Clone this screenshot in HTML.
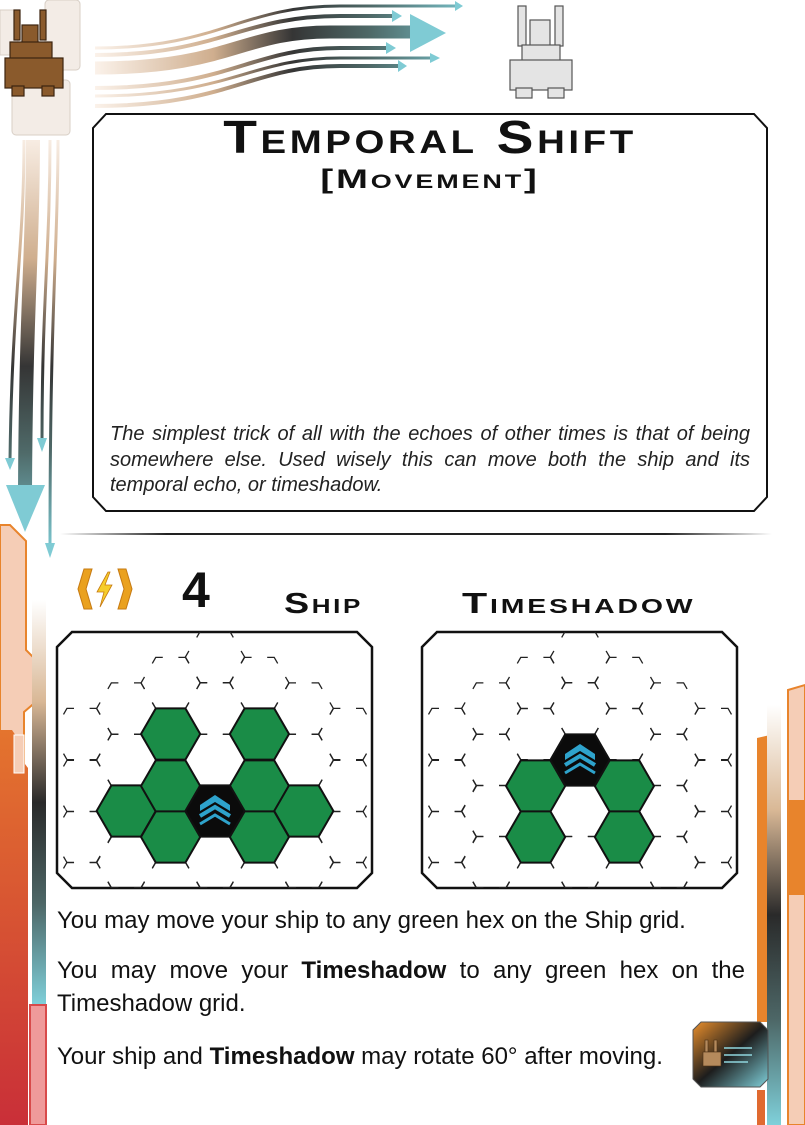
<!DOCTYPE html>
<html><head><meta charset="utf-8"><style>
html,body{margin:0;padding:0;background:#fff}
body{width:805px;height:1125px;position:relative;overflow:hidden;font-family:"Liberation Sans",sans-serif}
svg{position:absolute;left:0;top:0}
.t{position:absolute;white-space:nowrap;color:#111}
.title{left:93px;width:674px;text-align:center;top:111px;font-size:46px;font-weight:bold;font-variant:small-caps;letter-spacing:3px;line-height:52px;transform:scaleX(1.2);transform-origin:50% 0}
.sub{left:93px;width:674px;text-align:center;top:163px;font-size:27px;font-weight:bold;font-variant:small-caps;letter-spacing:2px;line-height:32px;transform:scaleX(1.42);transform-origin:50% 0}
.flav{position:absolute;left:110px;width:640px;top:422px;font-size:20px;font-style:italic;line-height:25.5px;text-align:justify;color:#222}
.body{position:absolute;left:57px;width:688px;font-size:24px;line-height:33px;text-align:justify;color:#111}
.lbl{font-size:29px;font-weight:bold;font-variant:small-caps;letter-spacing:2px;transform-origin:0 0}
</style></head><body>
<svg width="805" height="1125" viewBox="0 0 805 1125">
<defs>
<linearGradient id="gh" gradientUnits="userSpaceOnUse" x1="95" y1="0" x2="490" y2="0">
<stop offset="0" stop-color="#fbf2ea"/><stop offset="0.3" stop-color="#cfae8e"/><stop offset="0.5" stop-color="#353535"/><stop offset="0.7" stop-color="#4f6a69"/><stop offset="1" stop-color="#80d2dc"/></linearGradient>
<linearGradient id="gv" gradientUnits="userSpaceOnUse" x1="0" y1="130" x2="0" y2="560">
<stop offset="0" stop-color="#fbf2ea"/><stop offset="0.3" stop-color="#cfae8e"/><stop offset="0.55" stop-color="#353535"/><stop offset="0.75" stop-color="#4f6a69"/><stop offset="1" stop-color="#80d2dc"/></linearGradient>
<linearGradient id="gs" x1="0" y1="0" x2="0" y2="1">
<stop offset="0" stop-color="#fff"/><stop offset="0.25" stop-color="#d9b896"/><stop offset="0.5" stop-color="#2a2a2a"/><stop offset="0.75" stop-color="#4d6767"/><stop offset="1" stop-color="#7fd0da"/></linearGradient>
<linearGradient id="gr" x1="0" y1="0" x2="0" y2="1">
<stop offset="0" stop-color="#e4742e"/><stop offset="1" stop-color="#c92f38"/></linearGradient>
<linearGradient id="gi" x1="0" y1="0" x2="1" y2="1">
<stop offset="0" stop-color="#ea8f2c"/><stop offset="0.5" stop-color="#1d1d1d"/><stop offset="1" stop-color="#7fd0da"/></linearGradient>
<linearGradient id="dv" x1="0" y1="0" x2="1" y2="0">
<stop offset="0" stop-color="#fff"/><stop offset="0.15" stop-color="#222"/><stop offset="0.85" stop-color="#222"/><stop offset="1" stop-color="#fff"/></linearGradient>
<path id="hx" d="M-29.6 0L-14.8-25.65L14.8-25.65L29.6 0L14.8 25.65L-14.8 25.65Z"/>
<g id="chev">
<use href="#hx" fill="#0b0b0b" stroke="#111" stroke-width="2"/>
<path d="M-15-6L0-16L15-6L15 0L0-9L-15 0Z" fill="#2ea3cc"/>
<polyline points="-15,5 0,-4 15,5" fill="none" stroke="#2ea3cc" stroke-width="4"/>
<polyline points="-15,13 0,4 15,13" fill="none" stroke="#2ea3cc" stroke-width="3"/>
</g>
<clipPath id="c1"><path d="M72 632L357 632L372 647L372 873L357 888L72 888L57 873L57 647Z"/></clipPath>
<clipPath id="c2"><path d="M437 632L722 632L737 647L737 873L722 888L437 888L422 873L422 647Z"/></clipPath>
<g id="ghost" fill="none" stroke="#222" stroke-width="1.3" stroke-dasharray="7 15.6 7 0">
<use href="#hx" x="0" y="657"/><use href="#hx" x="0" y="708.5"/><use href="#hx" x="0" y="760"/><use href="#hx" x="0" y="811"/><use href="#hx" x="0" y="862"/>
<use href="#hx" x="-44.4" y="683"/><use href="#hx" x="-44.4" y="734"/><use href="#hx" x="-44.4" y="786"/><use href="#hx" x="-44.4" y="837"/><use href="#hx" x="-44.4" y="888"/>
<use href="#hx" x="44.4" y="683"/><use href="#hx" x="44.4" y="734"/><use href="#hx" x="44.4" y="786"/><use href="#hx" x="44.4" y="837"/><use href="#hx" x="44.4" y="888"/>
<use href="#hx" x="-88.8" y="708.5"/><use href="#hx" x="-88.8" y="760"/><use href="#hx" x="-88.8" y="811"/><use href="#hx" x="-88.8" y="862"/>
<use href="#hx" x="88.8" y="708.5"/><use href="#hx" x="88.8" y="760"/><use href="#hx" x="88.8" y="811"/><use href="#hx" x="88.8" y="862"/>
<use href="#hx" x="-133.2" y="734"/><use href="#hx" x="-133.2" y="786"/><use href="#hx" x="-133.2" y="837"/><use href="#hx" x="-133.2" y="888"/>
<use href="#hx" x="133.2" y="734"/><use href="#hx" x="133.2" y="786"/><use href="#hx" x="133.2" y="837"/><use href="#hx" x="133.2" y="888"/>
</g>
</defs>

<g fill="none" stroke="url(#gh)">
<path d="M95 48C220 48 240 6 340 6L455 6" stroke-width="3"/>
<path d="M95 55C220 55 240 16 340 16L395 16" stroke-width="4"/>
<path d="M95 68C230 68 240 32 330 32L415 32" stroke-width="13"/>
<path d="M95 88C230 88 250 48 340 48L390 48" stroke-width="4"/>
<path d="M95 96C230 96 250 58 340 58L432 58" stroke-width="3"/>
<path d="M95 106C230 106 250 66 340 66L400 66" stroke-width="4"/>
</g>
<g fill="#7fcbd4">
<path d="M455 1L463 6L455 11Z"/><path d="M392 10L402 16L392 22Z"/><path d="M410 14L446 33L410 52Z"/>
<path d="M386 42L396 48L386 54Z"/><path d="M430 53L440 58L430 63Z"/><path d="M398 60L407 66L398 72Z"/></g>

<g fill="#f3ece6" stroke="#d8cfc6" stroke-width="1">
<rect x="45" y="0" width="35" height="70" rx="4"/><rect x="12" y="80" width="58" height="55" rx="4"/><rect x="0" y="10" width="18" height="45"/></g>
<g fill="#8a5a2c" stroke="#3c2410" stroke-width="1.2">
<rect x="14" y="10" width="6" height="30"/><rect x="40" y="10" width="6" height="30"/>
<rect x="22" y="25" width="16" height="20"/><rect x="10" y="42" width="42" height="20"/>
<rect x="5" y="58" width="58" height="30"/><rect x="12" y="86" width="12" height="10"/><rect x="42" y="86" width="12" height="10"/></g>
<g fill="#e4e4e4" stroke="#555" stroke-width="1.2">
<rect x="518" y="6" width="8" height="40"/><rect x="555" y="6" width="8" height="40"/>
<rect x="530" y="20" width="20" height="30"/><rect x="522" y="45" width="38" height="20"/>
<rect x="510" y="60" width="62" height="30"/><rect x="516" y="88" width="16" height="10"/><rect x="548" y="88" width="16" height="10"/></g>

<g fill="none" stroke="url(#gv)">
<path d="M24 140C24 250 12 300 10 460" stroke-width="3"/>
<path d="M33 140C33 250 26 300 25 490" stroke-width="14"/>
<path d="M50 140C50 250 42 300 42 440" stroke-width="3"/>
<path d="M58 140C58 250 50 300 50 545" stroke-width="3"/>
</g>
<g fill="#7fcbd4"><path d="M5 458L15 458L10 470Z"/><path d="M37 438L47 438L42 452Z"/><path d="M6 485L45 485L25 532Z"/><path d="M45 543L55 543L50 558Z"/></g>

<path d="M0 525L10 525L26 541L26 650L38 662L38 700L24 712L24 780L0 780Z" fill="#f5cdb6" stroke="#e8842c" stroke-width="2"/>
<path d="M0 730L12 730L22 745L22 760L28 768L28 1125L0 1125Z" fill="url(#gr)"/>
<rect x="14" y="735" width="10" height="38" fill="#f5cdb6" stroke="#fff" stroke-width="1"/>
<rect x="32" y="600" width="14" height="405" fill="url(#gs)"/>
<path d="M30 1005L46 1005L46 1125L30 1125Z" fill="#ef9a9a" stroke="#d84a4a" stroke-width="2"/>

<path d="M757 738L770 735L770 1022L757 1022Z" fill="#e8842c"/>
<rect x="767" y="705" width="14" height="420" fill="url(#gs)"/>
<path d="M788 690L805 685L805 1125L788 1125Z" fill="#f5cdb6" stroke="#e8842c" stroke-width="2"/>
<rect x="788" y="800" width="17" height="95" fill="#e8842c"/>
<rect x="757" y="1090" width="8" height="35" fill="#e06a30"/>

<path d="M106 114L754 114L767 128L767 497L754 511L106 511L93 497L93 128Z" fill="#fff" stroke="#111" stroke-width="2"/>
<rect x="60" y="533" width="712" height="2" fill="url(#dv)"/>

<path d="M92 569L84 569L78 589L84 609L92 609L86 589Z" fill="#eaa11f" stroke="#c67a12"/>
<path d="M118 569L126 569L132 589L126 609L118 609L124 589Z" fill="#eaa11f" stroke="#c67a12"/>
<path d="M108 572L97 592L104 592L100 607L112 585L105 585L110 572Z" fill="#f6cd2a" stroke="#c67a12" stroke-width="0.8"/>

<path d="M72 632L357 632L372 647L372 873L357 888L72 888L57 873L57 647Z" fill="#fff" stroke="#111" stroke-width="2.5"/>
<g clip-path="url(#c1)"><use href="#ghost" x="215"/></g>
<g fill="#1a8c47" stroke="#111" stroke-width="2">
<use href="#hx" x="126.2" y="811"/><use href="#hx" x="170.6" y="734"/><use href="#hx" x="170.6" y="786"/><use href="#hx" x="170.6" y="837"/>
<use href="#hx" x="259.4" y="734"/><use href="#hx" x="259.4" y="786"/><use href="#hx" x="259.4" y="837"/><use href="#hx" x="303.8" y="811"/></g>
<use href="#chev" x="215" y="811"/>

<path d="M437 632L722 632L737 647L737 873L722 888L437 888L422 873L422 647Z" fill="#fff" stroke="#111" stroke-width="2.5"/>
<g clip-path="url(#c2)"><use href="#ghost" x="580"/></g>
<g fill="#1a8c47" stroke="#111" stroke-width="2">
<use href="#hx" x="535.6" y="786"/><use href="#hx" x="535.6" y="837"/><use href="#hx" x="624.4" y="786"/><use href="#hx" x="624.4" y="837"/></g>
<use href="#chev" x="580" y="760"/>

<path d="M701 1022L760 1022L768 1030L768 1079L760 1087L701 1087L693 1079L693 1030Z" fill="url(#gi)" stroke="#555" stroke-width="1"/>
<g fill="#b58a5c" stroke="#4a2f14" stroke-width="0.6"><rect x="705" y="1040" width="3" height="12"/><rect x="714" y="1040" width="3" height="12"/><rect x="703" y="1052" width="18" height="14"/></g>
<g stroke="#8fd6de" stroke-width="1.5"><line x1="724" y1="1048" x2="752" y2="1048"/><line x1="724" y1="1055" x2="752" y2="1055"/><line x1="724" y1="1062" x2="748" y2="1062"/></g>
</svg>

<div class="t title">Temporal Shift</div>
<div class="t sub">[Movement]</div>
<div class="flav">The simplest trick of all with the echoes of other times is that of being somewhere else. Used wisely this can move both the ship and its temporal echo, or timeshadow.</div>

<div class="t" style="left:182px;top:562px;font-size:50px;font-weight:bold;line-height:56px">4</div>
<div class="t lbl" style="left:284px;top:586px;line-height:36px;transform:scaleX(1.3)">Ship</div>
<div class="t lbl" style="left:462px;top:586px;line-height:36px;transform:scaleX(1.42)">Timeshadow</div>

<div class="body" style="top:904px">You may move your ship to any green hex on the Ship grid.</div>
<div class="body" style="top:954px">You may move your <b>Timeshadow</b> to any green hex on the Timeshadow grid.</div>
<div class="body" style="top:1040px;width:630px">Your ship and <b>Timeshadow</b> may rotate 60° after moving.</div>
</body></html>
